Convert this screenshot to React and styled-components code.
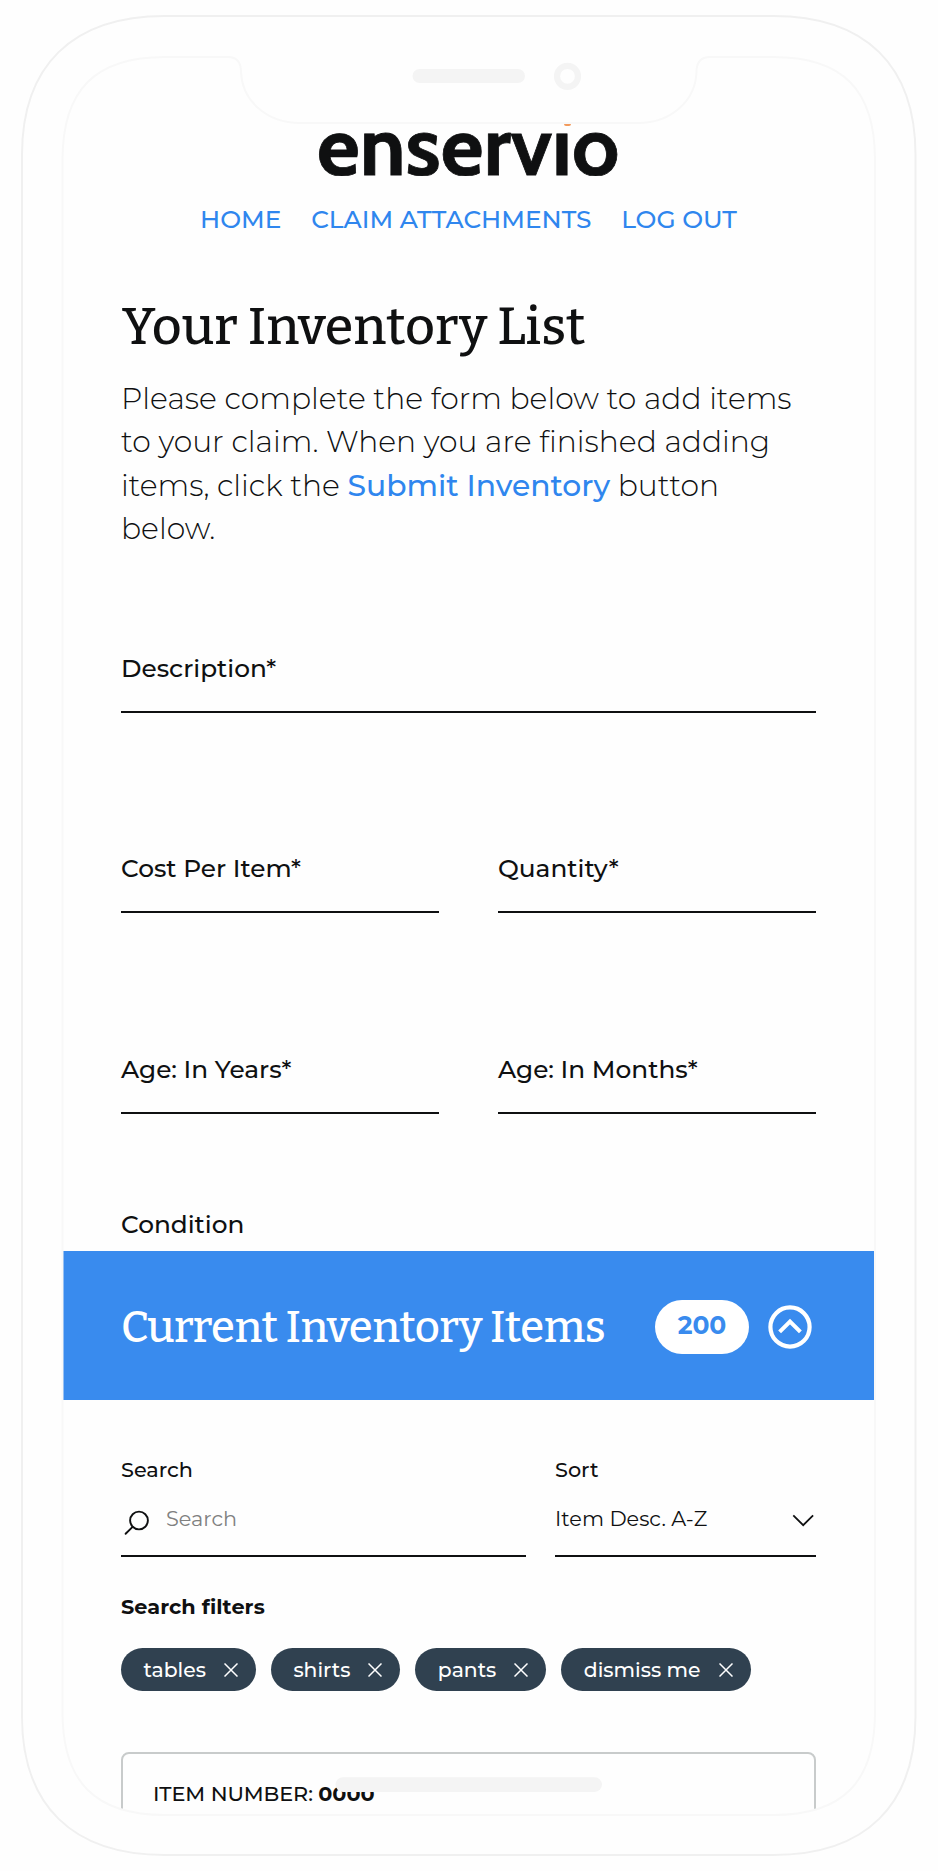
import React from "react";
import styled, { createGlobalStyle } from "styled-components";

const ink = "#0f1011";
const blue = "#398bee";
const sans = `Montserrat, Inter, "Liberation Sans", sans-serif`;
const slab = `Bitter, "Noto Serif", "DejaVu Serif", serif`;

const GlobalStyle = createGlobalStyle`
  *, *::before, *::after { box-sizing: border-box; }
  body { margin: 0; background: #fefefe; color: ${ink}; font-family: ${sans}; }
  h1, h2, p { margin: 0; }
  a { text-decoration: none; }
  button { border: 0; padding: 0; background: none; font: inherit; color: inherit; }
  svg { display: block; }
`;

const Phone = styled.div`
  position: relative;
  width: 938px;
  height: 1871px;
  padding: 57px 64px 56px 63px;
  overflow: hidden;
`;

const Frame = styled.svg`
  position: absolute;
  inset: 0;
  pointer-events: none;
`;

const Screen = styled.div`
  display: flex;
  flex-direction: column;
  height: 1758px;
  overflow: hidden;
`;

const Main = styled.main`
  flex: none;
  height: 1194px;
  padding: 67px 58px 0;
  overflow: hidden;
`;

const Logo = styled.div`
  position: relative;
  display: flex;
  height: 52px;
  margin-left: 196px;
`;

const Wordmark = styled.span`
  font: 700 83px/98px Cabin, Lato, sans-serif;
  -webkit-text-stroke: 0.8px ${ink};
  margin-top: -27.5px;
  clip-path: inset(34.5px 0 0 0);
`;

const LogoMark = styled.span`
  position: absolute;
  left: ${(p) => p.$x}px;
  top: ${(p) => p.$y}px;
  width: ${(p) => p.$w}px;
  height: ${(p) => p.$h}px;
  background: ${(p) => p.$color};
  border-radius: ${(p) => p.$radius || 0};
`;

const Nav = styled.nav`
  display: flex;
  justify-content: center;
  gap: 29.8px;
  margin: 28px -58px 0;
  font-weight: 500;
  font-size: 24.8px;
  line-height: 30px;
`;

const NavLink = styled.a`
  color: #2f86ee;
`;

const Title = styled.h1`
  margin: 63px 0 0 1px;
  font: 500 52px/60px ${slab};
  white-space: nowrap;
`;

const Intro = styled.p`
  margin-top: 20.2px;
  font-weight: 300;
  font-size: 29.8px;
  line-height: 43.3px;
  white-space: nowrap;
`;

const Strong = styled.a`
  font-weight: 500;
  color: #2f86ee;
`;

const Form = styled.form`
  display: grid;
  grid-template-columns: 1fr 1fr;
  column-gap: 59px;
  row-gap: 140.4px;
  margin-top: 102.6px;
`;

const Field = styled.label`
  grid-column: ${(p) => (p.$wide ? "1 / -1" : "auto")};
  height: 60px;
  border-bottom: 2px solid ${ink};
  font-weight: 500;
  font-size: 24.8px;
  line-height: 30px;
`;

const PlainLabel = styled.div`
  margin-top: 95px;
  font-weight: 500;
  font-size: 24.8px;
  line-height: 30px;
`;

const Band = styled.section`
  flex: none;
  display: flex;
  align-items: center;
  height: 149px;
  padding: 0 62.5px 0 58px;
  background: ${blue};
  color: #fff;
`;

const BandTitle = styled.h2`
  flex: 1;
  padding-top: 5px;
  font: 500 43.6px/50px ${slab};
  letter-spacing: -0.46px;
  white-space: nowrap;
`;

const Count = styled.span`
  width: 94px;
  height: 54px;
  margin: 2px 18.5px 0 0;
  border-radius: 27px;
  background: #fff;
  color: ${blue};
  font-weight: 700;
  font-size: 25px;
  line-height: 51px;
  text-align: center;
`;

const Toggle = styled.button`
  margin-top: 3px;
`;

const Panel = styled.section`
  flex: none;
  padding: 56.5px 58px 0;
  font-size: 20.8px;
  line-height: 26px;
`;

const Controls = styled.div`
  display: grid;
  grid-template-columns: 404.5px 261px;
  column-gap: 29.5px;
`;

const ControlLabel = styled.div`
  font-weight: 500;
`;

const Control = styled.div`
  display: flex;
  align-items: flex-start;
  height: 74.5px;
  padding-top: 23px;
  border-bottom: 2px solid ${ink};
`;

const Placeholder = styled.span`
  margin-left: 16px;
  color: #808080;
`;

const SortValue = styled.span`
  flex: 1;
`;

const FiltersTitle = styled.div`
  margin-top: 37px;
  font-weight: 700;
  letter-spacing: 0.08px;
`;

const Chips = styled.div`
  display: flex;
  gap: 15px;
  margin-top: 28px;
`;

const Chip = styled.span`
  display: flex;
  align-items: center;
  gap: 18px;
  height: 43px;
  padding: 0 18px 0 22.5px;
  border-radius: 22px;
  background: #304150;
  color: #fff;
  font-weight: 500;
  font-size: 20.35px;
`;

const Card = styled.article`
  height: 90px;
  margin-top: 60.5px;
  padding: 27.5px 30px;
  border: 2px solid #c8cbcb;
  border-radius: 8px;
  font-weight: 500;
  letter-spacing: -0.08px;
`;

const CloseIcon = () => (
  <svg width="14" height="14" viewBox="0 0 14 14" fill="none" stroke="#fff" strokeWidth="1.5">
    <path d="M0.5 0.5 13.5 13.5M13.5 0.5 0.5 13.5" />
  </svg>
);

const SearchIcon = () => (
  <svg width="29" height="30" viewBox="0 0 29 30" fill="none" stroke={ink} strokeWidth="1.9" strokeLinecap="round">
    <circle cx="18" cy="14.5" r="8.9" />
    <path d="M11.6 20.9 4.6 27.8" />
  </svg>
);

const ChevronDown = () => (
  <svg width="24" height="26" viewBox="0 0 24 26" fill="none" stroke={ink} strokeWidth="1.8">
    <path d="M1.3 9.3 11.2 19.2 21.1 9.3" />
  </svg>
);

const CircleUp = () => (
  <svg width="44" height="44" viewBox="0 0 44 44" fill="none" stroke="#fff">
    <circle cx="22" cy="22" r="19.6" strokeWidth="4.2" />
    <path d="M11.6 26.9 22 16.5 32.4 26.9" strokeWidth="4" />
  </svg>
);

const outer =
  "M22 155C22 66 72 16 165 16H773C866 16 915.5 66 915.5 155V1716C915.5 1805 866 1855 773 1855H165C72 1855 22 1805 22 1716Z";
const inner =
  "M62.5 160C62.5 90 95 57 165 57H228C238 57 241 63 241 72C242 100 266 123 300 123H638C672 123 695.5 100 696.5 72C696.5 63 700 57 710 57H773C843 57 875 90 875 160V1712C875 1782 843 1815 773 1815H165C95 1815 62.5 1782 62.5 1712Z";

const DeviceFrame = () => (
  <Frame width="938" height="1871" viewBox="0 0 938 1871" fill="none">
    <path d={outer + inner} fill="#fefefe" fillRule="evenodd" />
    <path d={outer} stroke="#f0f0f0" strokeWidth="2" />
    <path d={inner} stroke="#f8f8f8" strokeWidth="2" />
    <rect x="412.5" y="69" width="112.5" height="14" rx="7" fill="#f4f4f4" />
    <circle cx="567.5" cy="76.3" r="10.5" stroke="#f4f4f4" strokeWidth="6.2" />
    <rect x="335.5" y="1777.3" width="266.5" height="14.6" rx="7.3" fill="#f4f4f4" />
  </Frame>
);

const links = ["HOME", "CLAIM ATTACHMENTS", "LOG OUT"];
const fields = ["Description*", "Cost Per Item*", "Quantity*", "Age: In Years*", "Age: In Months*"];
const filters = ["tables", "shirts", "pants", "dismiss me"];

export default function App() {
  return (
    <>
      <GlobalStyle />
      <Phone>
        <Screen>
          <Main>
            <Logo>
              <Wordmark>enservio</Wordmark>
              <LogoMark $x={242} $y={10.5} $w={8} $h={5} $color={ink} />
              <LogoMark $x={247} $y={0} $w={7} $h={2} $color="#f29a5c" $radius="0 0 4px 4px" />
            </Logo>
            <Nav>
              {links.map((label) => (
                <NavLink key={label}>{label}</NavLink>
              ))}
            </Nav>
            <Title>Your Inventory List</Title>
            <Intro>
              Please complete the form below to add items
              <br />
              to your claim. When you are finished adding
              <br />
              items, click the <Strong>Submit Inventory</Strong> button
              <br />
              below.
            </Intro>
            <Form>
              {fields.map((label, i) => (
                <Field key={label} $wide={i === 0}>
                  {label}
                </Field>
              ))}
            </Form>
            <PlainLabel>Condition</PlainLabel>
          </Main>
          <Band>
            <BandTitle>Current Inventory Items</BandTitle>
            <Count>200</Count>
            <Toggle aria-label="Collapse">
              <CircleUp />
            </Toggle>
          </Band>
          <Panel>
            <Controls>
              <ControlLabel>Search</ControlLabel>
              <ControlLabel>Sort</ControlLabel>
              <Control>
                <SearchIcon />
                <Placeholder>Search</Placeholder>
              </Control>
              <Control>
                <SortValue>Item Desc. A-Z</SortValue>
                <ChevronDown />
              </Control>
            </Controls>
            <FiltersTitle>Search filters</FiltersTitle>
            <Chips>
              {filters.map((label) => (
                <Chip key={label}>
                  {label}
                  <CloseIcon />
                </Chip>
              ))}
            </Chips>
            <Card>
              ITEM NUMBER: <b>0000</b>
            </Card>
          </Panel>
        </Screen>
        <DeviceFrame />
      </Phone>
    </>
  );
}
